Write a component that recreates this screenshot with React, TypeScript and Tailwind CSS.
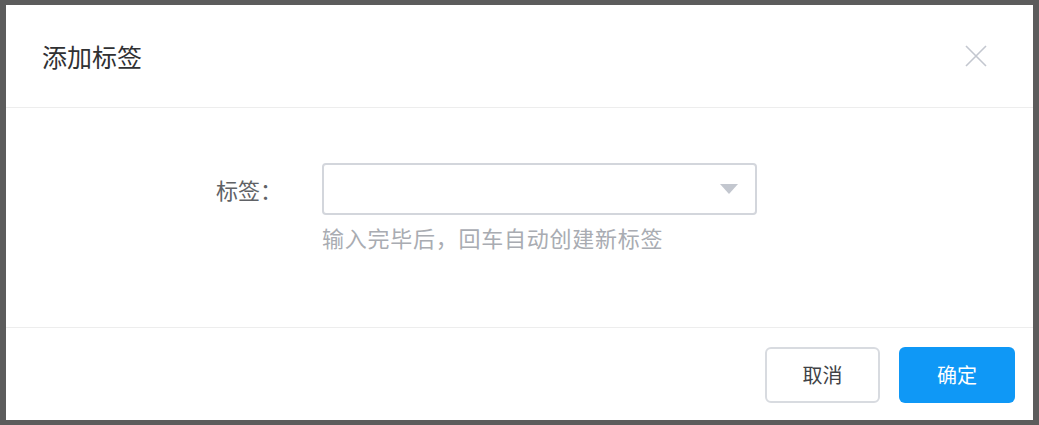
import React from 'react'

const font = { fontFamily: '"Noto Sans CJK SC", "Noto Sans", sans-serif' }

function CloseIcon() {
  return (
    <svg width="24" height="24" viewBox="0 0 24 24" fill="none" stroke="#c3c7cf" strokeWidth="1.6">
      <path d="M2 2 L22 22 M22 2 L2 22" />
    </svg>
  )
}

export default function App() {
  return (
    <div className="w-[1039px] h-[425px] bg-[#5c5c5c] pt-[5px] pl-[6px] pr-[6px] pb-[5px]" style={font}>
      <div className="h-full bg-white flex flex-col">
        <div className="h-[103px] flex items-center justify-between pl-[36px] pr-[45px] border-b border-[#ededed]">
          <h2 className="text-[25px] text-[#303133] leading-none">添加标签</h2>
          <button><CloseIcon /></button>
        </div>

        <div className="h-[219px] pt-[55px] flex">
          <label className="w-[316px] shrink-0 text-right pr-[40px] text-[22px] text-[#606266] leading-[52px]">
            标签：
          </label>
          <div>
            <div className="w-[435px] h-[52px] border-2 border-[#d3d6dc] rounded-[4px] flex items-center justify-end pr-[16px]">
              <svg width="20" height="12" viewBox="0 0 20 12">
                <path d="M1 1 L19 1 L10 11 Z" fill="#c3c7cf" />
              </svg>
            </div>
            <p className="mt-[7px] text-[22px] tracking-[0.75px] leading-[30px] text-[#a9acb2]">
              输入完毕后，回车自动创建新标签
            </p>
          </div>
        </div>

        <div className="flex-1 border-t border-[#ededed] flex justify-end items-start pt-[19px] pr-[18px] gap-[19px]">
          <button className="w-[115px] h-[56px] border-2 border-[#d8dbe0] rounded-[6px] bg-white text-[20px] text-[#404246]">
            取消
          </button>
          <button className="w-[116px] h-[56px] rounded-[6px] bg-[#0f98f6] text-[20px] text-white">
            确定
          </button>
        </div>
      </div>
    </div>
  )
}
